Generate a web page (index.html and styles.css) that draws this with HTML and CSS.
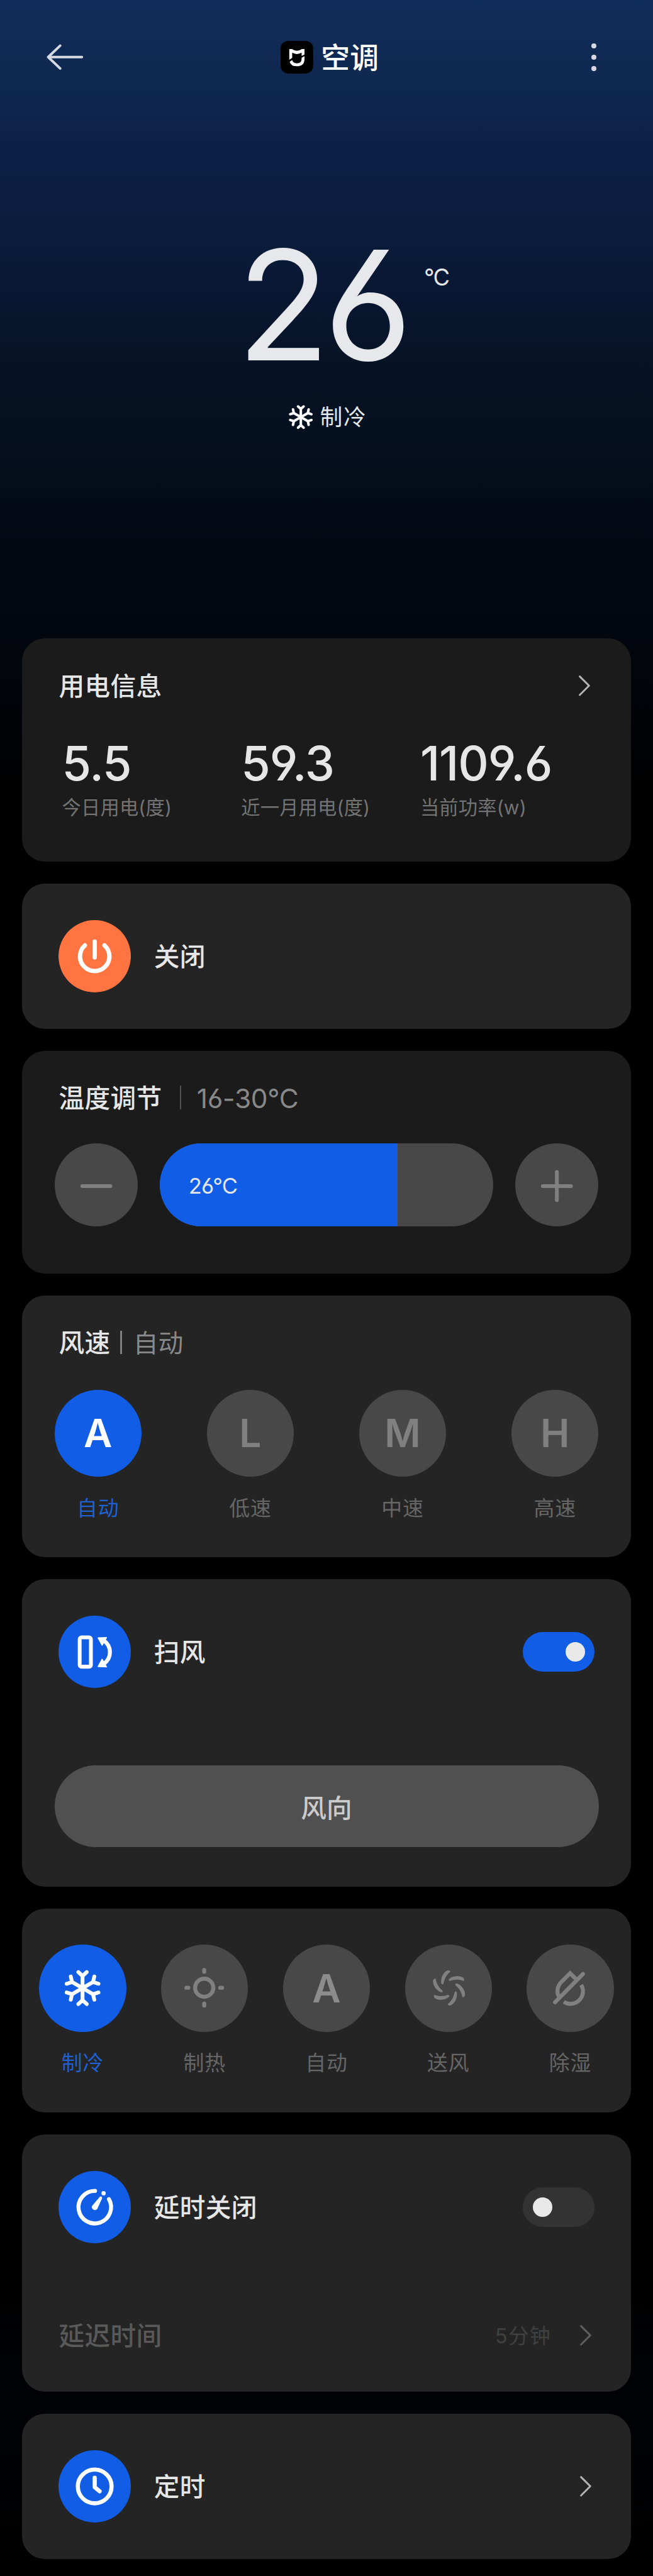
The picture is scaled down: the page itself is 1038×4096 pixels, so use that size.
FILE: index.html
```html
<!DOCTYPE html>
<html lang="zh-CN">
<head>
<meta charset="utf-8">
<title>空调</title>
<link rel="stylesheet" href="styles.css">
</head>
<body>
<svg class="defs" aria-hidden="true">
  <symbol id="snow" viewBox="-100 -100 200 200">
    <g id="spoke" fill="none" stroke="currentColor" stroke-width="21" stroke-linecap="round" stroke-linejoin="round"><path d="M0 0V-68M-23 -88L0 -67L23 -88"/></g>
    <use href="#spoke" transform="rotate(60)"/><use href="#spoke" transform="rotate(120)"/><use href="#spoke" transform="rotate(180)"/><use href="#spoke" transform="rotate(240)"/><use href="#spoke" transform="rotate(300)"/>
  </symbol>
  <symbol id="chevron" viewBox="0 0 24 40"><path d="M3 3L20 20L3 37" fill="none" stroke="currentColor" stroke-width="3.4" stroke-linecap="round" stroke-linejoin="round"/></symbol>
</svg>
<main class="page">
  <header class="topbar">
    <svg class="back" viewBox="0 0 68 48"><path d="M65 24H3M25 3L3 24L25 45" fill="none" stroke="currentColor" stroke-width="4.6" stroke-linecap="round" stroke-linejoin="round"/></svg>
    <div class="brand">
      <svg class="logo" viewBox="48 78 180 180"><rect x="48" y="78" width="180" height="180" rx="42" fill="#000"/><path fill="#fff" d="M96 123H111Q138 142 165 123H180V153L164 161V143Q138 158 112 143V172L96 182ZM164 171L180 162V176Q180 218 138 218Q105 218 98 193L112 184Q117 202 138 202Q164 202 164 176Z"/></svg>
      <h1>空调</h1>
    </div>
    <div class="more"><i></i><i></i><i></i></div>
  </header>

  <section class="hero">
    <div class="temp">26<span class="unit">°C</span></div>
    <div class="state"><svg viewBox="-100 -100 200 200"><use href="#snow" x="-100" y="-100" width="200" height="200"/></svg><span>制冷</span></div>
  </section>

  <div class="cards">
    <section class="card dark energy">
      <div class="row"><h2>用电信息</h2><svg class="chev"><use href="#chevron"/></svg></div>
      <div class="stats">
        <div><b>5.5</b><span>今日用电(度)</span></div>
        <div><b>59.3</b><span>近一月用电(度)</span></div>
        <div><b>1109.6</b><span>当前功率(w)</span></div>
      </div>
    </section>

    <section class="card single">
      <div class="disc orange"><svg viewBox="-66.5 -66.5 133 133"><path d="M-18 -20A27 27 0 1 0 18 -20M0 -27V2" fill="none" stroke="#fff" stroke-width="8" stroke-linecap="round"/></svg></div>
      <h2>关闭</h2>
    </section>

    <section class="card dark adjust">
      <div class="heading"><h2>温度调节</h2><i></i><span>16-30°C</span></div>
      <div class="slider-row">
        <button class="step"><svg viewBox="-77 -77 154 154"><path d="M-26 2H26"/></svg></button>
        <div class="slider"><div class="fill" style="width:71.3%">26°C</div></div>
        <button class="step"><svg viewBox="-77 -77 154 154"><path d="M-26 2H26M0 -24V28"/></svg></button>
      </div>
    </section>

    <section class="card speed">
      <div class="heading tight"><h2>风速</h2><i></i><span>自动</span></div>
      <div class="options">
        <div class="opt on"><b>A</b><span>自动</span></div>
        <div class="opt"><b>L</b><span>低速</span></div>
        <div class="opt"><b>M</b><span>中速</span></div>
        <div class="opt"><b>H</b><span>高速</span></div>
      </div>
    </section>

    <section class="card swing">
      <div class="row item">
        <div class="disc"><svg viewBox="-200 -200 400 400"><g fill="none" stroke="#fff"><rect x="-83" y="-80" width="62" height="162" rx="10" stroke-width="21"/><path d="M50 -62A77 77 0 0 1 50 66" stroke-width="22"/></g><path d="M19 -77L65 -79L41 -37ZM19 81L65 83L41 41Z" fill="#fff" stroke="#fff" stroke-width="6" stroke-linejoin="round"/></svg></div>
        <h2>扫风</h2>
        <div class="toggle on"><i></i></div>
      </div>
      <hr>
      <button class="wide">风向</button>
    </section>

    <section class="card modes">
      <div class="opt on"><b><svg viewBox="-240 -240 480 480"><use href="#snow" x="-100" y="-100" width="200" height="200"/></svg></b><span>制冷</span></div>
      <div class="opt"><b><svg viewBox="-240 -240 480 480"><g transform="translate(-2 -2)" fill="none" stroke="currentColor" stroke-width="22" stroke-linecap="round"><circle r="50"/><path d="M0 -98V-88M0 88V98M-98 0H-88M88 0H98"/></g></svg></b><span>制热</span></div>
      <div class="opt auto"><b>A</b><span>自动</span></div>
      <div class="opt"><b><svg viewBox="-240 -240 480 480"><g transform="translate(2 -1)" fill="currentColor">
        <path id="blade" d="M-10 -96Q-3 -99 5 -94Q9 -90 5 -87C-18 -68 -26 -45 -30 -25Q-33 -18 -40 -20Q-44 -24 -44 -36C-43 -62 -30 -86 -10 -96Z"/>
        <use href="#blade" transform="rotate(60)"/><use href="#blade" transform="rotate(120)"/><use href="#blade" transform="rotate(180)"/><use href="#blade" transform="rotate(240)"/><use href="#blade" transform="rotate(300)"/></g></svg></b><span>送风</span></div>
      <div class="opt"><b><svg viewBox="-240 -240 480 480"><g transform="translate(0 -1)" fill="none" stroke="currentColor" stroke-width="22"><path d="M-61 50A69 69 0 0 1 -49 -32L0 -81L32 -49M61 -17A69 69 0 0 1 -35 77"/><path d="M71 -77L-83 79" stroke-linecap="round"/></g></svg></b><span>除湿</span></div>
    </section>

    <section class="card delay">
      <div class="row item">
        <div class="disc"><svg viewBox="-200 -200 400 400"><path d="M2 -90A90 90 0 1 0 79 -44" fill="none" stroke="#fff" stroke-width="22" stroke-linecap="round"/><circle cx="49" cy="-77" r="12" fill="#fff"/><path d="M-15 -6L27 -56A8 8 0 0 1 41 -49L14 10A17 17 0 0 1 -15 -6Z" fill="#fff"/></svg></div>
        <h2>延时关闭</h2>
        <div class="toggle"><i></i></div>
      </div>
      <div class="row sub"><h2>延迟时间</h2><span>5分钟</span><svg class="chev"><use href="#chevron"/></svg></div>
    </section>

    <section class="card single">
      <div class="disc"><svg viewBox="-66.5 -66.5 133 133"><g fill="none" stroke="#fff" stroke-width="7.6" stroke-linecap="round" stroke-linejoin="round"><circle r="31"/><path d="M0 -16V1.500L9 9"/></g></svg></div>
      <h2>定时</h2>
      <svg class="chev"><use href="#chevron"/></svg>
    </section>
  </div>
</main>
</body>
</html>
```
FILE: styles.css
```css
/* 1rem = 100 design pixels */
html { font-size: 86.52px; background: #000; }
* { box-sizing: border-box; }
body {
  margin: 0;
  font-family: Inter, "Noto Sans CJK SC", sans-serif;
  font-feature-settings: "cv03", "cv04";
  color: #e6e6e6;
}
h1, h2 { margin: 0; font-weight: 500; }
i { display: block; font-style: normal; }
button { border: 0; padding: 0; color: inherit; font: inherit; }
svg { display: block; }
.defs { position: absolute; width: 0; height: 0; }

.page {
  height: 4096px;
  overflow: hidden;
  background: linear-gradient(#102c5a 0, #0f2850 1.6rem, #0c2148 2.6rem, #0a1c3a 4.4rem, #081630 5.6rem, #061324 6.8rem, #05101f 8rem, #030a15 9.5rem, #02060e 11.7rem, #000 14.5rem, #000 42rem, #010205 44rem, #000 47rem);
}

.topbar { height: 2.1rem; padding: 0 1.04rem 0 .86rem; display: grid; grid-template-columns: 1fr auto 1fr; align-items: center; }
.back { width: .68rem; height: .48rem; color: #d5dae2; }
.brand { display: flex; align-items: center; gap: .14rem; margin-left: .3rem; }
.logo { width: .6rem; height: .6rem; }
h1 { font-size: .53rem; line-height: .6rem; padding-top: .02rem; color: #fff; }
.more { justify-self: end; display: flex; flex-direction: column; gap: .12rem; }
.more i { width: .09rem; height: .09rem; border-radius: 50%; background: #d5dae2; }

.hero { height: 9.63rem; padding-top: 2.11rem; display: flex; flex-direction: column; align-items: center; color: #e6e8ec; }
.temp { position: relative; font-size: 2.8rem; line-height: 2.8rem; letter-spacing: -.11rem; font-weight: 400; margin-right: .18rem; }
.unit { position: absolute; left: 3.44rem; top: .64rem; font-size: .42rem; line-height: .5rem; letter-spacing: -.02rem; }
.state { display: flex; align-items: center; gap: .13rem; margin: .41rem 0 0 .05rem; font-size: .41rem; line-height: .5rem; letter-spacing: .02rem; }
.state svg { width: .444rem; height: .444rem; color: #fff; }

.cards { display: flex; flex-direction: column; gap: .4rem; padding: 0 .4rem; }
.card { border-radius: .42rem; background: #242424; padding: 0 .6rem; }
.card.dark { background: #1b1b1b; }
h2 { font-size: .47rem; line-height: .6rem; letter-spacing: .004rem; padding-top: .04rem; }
.row { display: flex; align-items: center; justify-content: space-between; }
.chev { width: .24rem; height: .4rem; color: #b4b4b4; }

.energy { height: 4.11rem; padding: .55rem .74rem 0 .68rem; }
.stats { display: grid; grid-template-columns: repeat(3, 3.29rem); margin: .62rem 0 0 .06rem; }
.stats b { display: block; font-size: .87rem; line-height: 1rem; font-weight: 500; letter-spacing: -.012rem; }
.stats span { display: block; font-size: .35rem; line-height: .5rem; color: #737373; letter-spacing: .002rem; margin-top: .06rem; white-space: nowrap; }

.single { height: 2.67rem; padding: 0 .71rem 0 .67rem; display: flex; align-items: center; }
.disc { width: 1.33rem; height: 1.33rem; border-radius: 50%; background: #115de6; flex: none; margin-right: .43rem; }
.disc svg { width: 100%; height: 100%; }
.disc.orange { background: #ff7440; }
.single .chev { margin-left: auto; }

.adjust { height: 4.1rem; padding-top: .56rem; }
.heading { display: flex; align-items: center; padding-left: .08rem; height: .6rem; }
.heading i { width: .02rem; height: .43rem; background: #505050; margin: 0 .29rem 0 .33rem; }
.heading span { font-size: .49rem; line-height: .6rem; padding-top: .04rem; color: #888; letter-spacing: -.003rem; }
.heading.tight i { width: .04rem; background: #808080; margin: 0 .2rem 0 .18rem; }
.heading.tight span { font-size: .46rem; letter-spacing: 0; }
.slider-row { display: flex; justify-content: space-between; margin-top: .54rem; }
.step { width: 1.53rem; height: 1.53rem; border-radius: 50%; background: #484848; }
.step svg { width: 100%; height: 100%; fill: none; stroke: #808080; stroke-width: 7; stroke-linecap: round; }
.slider { width: 6.13rem; height: 1.53rem; border-radius: .77rem; background: #484848; overflow: hidden; }
.fill { height: 100%; background: #115de6; padding-left: .53rem; font-size: .4rem; line-height: 1.56rem; letter-spacing: -.01rem; }

.speed { height: 4.81rem; padding-top: .56rem; }
.options { display: flex; justify-content: space-between; margin-top: .57rem; }
.opt { width: 1.6rem; text-align: center; color: #808080; }
.opt b { display: flex; align-items: center; justify-content: center; height: 1.6rem; border-radius: 50%; background: #484848; font-size: .72rem; font-weight: 600; }
.opt b svg { width: 100%; height: 100%; }
.opt span { display: block; margin-top: .33rem; font-size: .38rem; line-height: .5rem; letter-spacing: .01rem; color: #666; }
.opt.on b { background: #115de6; color: #fff; }
.opt.on span { color: #1f60d2; }
.opt.auto b { color: #8c8c8c; }

.swing { height: 5.66rem; padding-top: .67rem; }
.item { padding: 0 .07rem; }
.item h2 { margin-right: auto; }
.toggle { width: 1.32rem; height: .73rem; border-radius: .37rem; background: #333; padding: .185rem .18rem; }
.toggle i { width: .36rem; height: .36rem; border-radius: 50%; background: #e9e9e9; }
.toggle.on { background: #115de6; }
.toggle.on i { margin-left: auto; }
hr { height: .02rem; border: 0; margin: .68rem .07rem .73rem; background: #212121; }
.wide { display: block; width: 100%; height: 1.5rem; border-radius: .75rem; background: #505050; color: #cbcbcb; font-size: .47rem; font-weight: 500; }

.modes { height: 3.75rem; padding: .66rem .32rem 0; display: flex; justify-content: space-between; }

.delay { height: 4.73rem; padding-top: .67rem; }
.sub { margin-top: 1.37rem; padding: 0 .11rem 0 .08rem; color: #595959; }
.sub span { margin-left: auto; font-size: .38rem; line-height: .6rem; padding-top: .04rem; color: #404040; letter-spacing: .015rem; }
.sub .chev { margin-left: .52rem; color: #606060; }
```
